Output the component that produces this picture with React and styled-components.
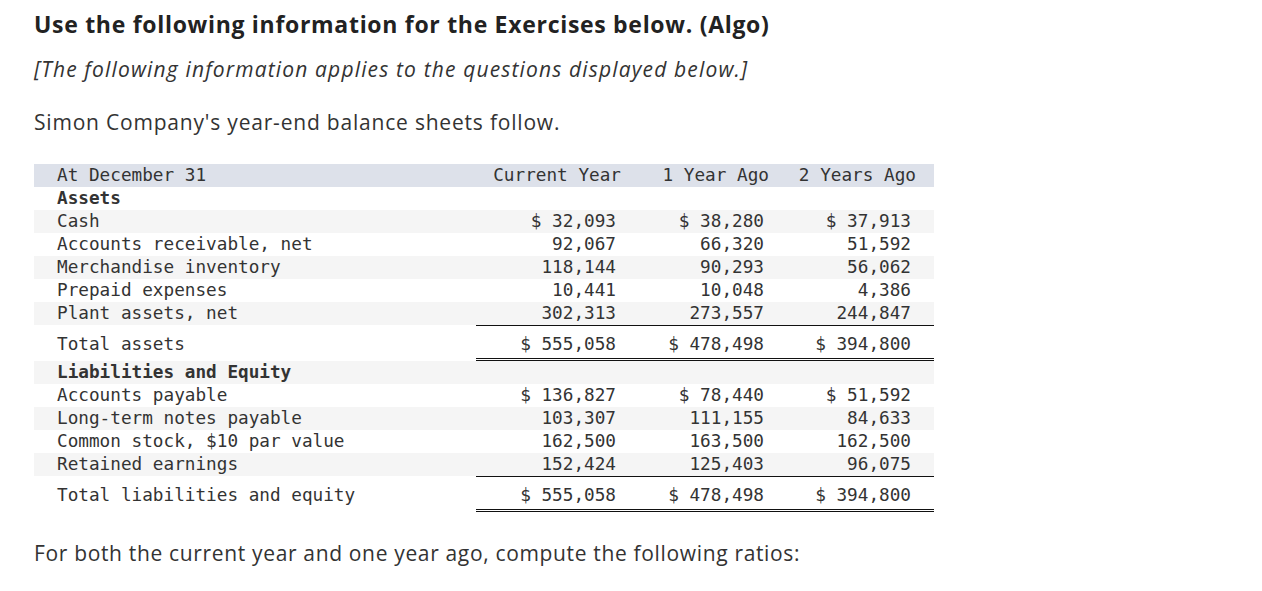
import React from 'react'
import styled, { createGlobalStyle } from 'styled-components'

const GlobalStyle = createGlobalStyle`
  body {
    margin: 0;
    background: #ffffff;
    color: #333333;
    font-family: 'Open Sans', 'Lato', sans-serif;
  }
`

const Page = styled.div`
  padding: 9px 34px 0px 34px;
`

const Heading = styled.h2`
  font-size: 23px;
  line-height: 30px;
  font-weight: 700;
  letter-spacing: 0.7px;
  color: #222222;
  margin: 0px;
`

const Note = styled.p`
  font-size: 21px;
  line-height: 28px;
  font-style: italic;
  letter-spacing: 1.15px;
  margin: 16px 0px 0px 0px;
`

const Intro = styled.p`
  font-size: 21px;
  line-height: 28px;
  letter-spacing: 0.8px;
  margin: 25px 0px 0px 0px;
`

const Sheet = styled.div`
  width: 900px;
  margin-top: 28px;
  font-family: 'DejaVu Sans Mono', 'Liberation Mono', monospace;
  font-size: 17.7px;
  line-height: 23px;
  color: #333333;
`

const COLUMNS = '442px 148px 148px 147px 15px'

const Row = styled.div`
  display: grid;
  grid-template-columns: ${COLUMNS};
  background: ${({ $shade }) =>
    $shade === 'header' ? '#dde1ea' : $shade ? '#f5f5f5' : 'transparent'};
`

const Label = styled.div`
  padding-left: 23px;
  font-weight: ${({ $bold }) => ($bold ? 700 : 400)};
  white-space: pre;
`

const Heads = styled.div`
  text-align: right;
  padding-right: 3px;
  white-space: pre;
`

const Num = styled.div`
  text-align: right;
  padding-right: 8px;
  white-space: pre;
`

const Figures = styled.div`
  grid-column: 2 / -1;
  display: grid;
  grid-template-columns: 148px 148px 147px 15px;
  padding: 7px 0px 2px 0px;
  border-top: 1px solid #111111;
  border-bottom: 3px double #111111;
`

const TotalLabel = styled(Label)`
  padding-top: 8px;
`

const Closing = styled.p`
  font-size: 21px;
  line-height: 28px;
  letter-spacing: 0.66px;
  margin: 27px 0px 0px 0px;
`

const assets = [
  ['Cash', '$ 32,093', '$ 38,280', '$ 37,913'],
  ['Accounts receivable, net', '92,067', '66,320', '51,592'],
  ['Merchandise inventory', '118,144', '90,293', '56,062'],
  ['Prepaid expenses', '10,441', '10,048', '4,386'],
  ['Plant assets, net', '302,313', '273,557', '244,847'],
]

const liabilities = [
  ['Accounts payable', '$ 136,827', '$ 78,440', '$ 51,592'],
  ['Long-term notes payable', '103,307', '111,155', '84,633'],
  ['Common stock, $10 par value', '162,500', '163,500', '162,500'],
  ['Retained earnings', '152,424', '125,403', '96,075'],
]

const Line = ({ row, shade }) => (
  <Row $shade={shade}>
    <Label>{row[0]}</Label>
    <Num>{row[1]}</Num>
    <Num>{row[2]}</Num>
    <Num>{row[3]}</Num>
    <div />
  </Row>
)

const Total = ({ label, values }) => (
  <Row>
    <TotalLabel>{label}</TotalLabel>
    <Figures>
      {values.map((v) => (
        <Num key={v}>{v}</Num>
      ))}
      <div />
    </Figures>
  </Row>
)

const App = () => (
  <Page>
    <GlobalStyle />
    <Heading>Use the following information for the Exercises below. (Algo)</Heading>
    <Note>[The following information applies to the questions displayed below.]</Note>
    <Intro>Simon Company's year-end balance sheets follow.</Intro>
    <Sheet>
      <Row $shade="header">
        <Label>At December 31</Label>
        <Heads>Current Year</Heads>
        <Heads>1 Year Ago</Heads>
        <Heads>2 Years Ago</Heads>
        <div />
      </Row>
      <Row>
        <Label $bold>Assets</Label>
      </Row>
      {assets.map((row, i) => (
        <Line key={row[0]} row={row} shade={i % 2 === 0} />
      ))}
      <Total label="Total assets" values={['$ 555,058', '$ 478,498', '$ 394,800']} />
      <Row $shade>
        <Label $bold>Liabilities and Equity</Label>
      </Row>
      {liabilities.map((row, i) => (
        <Line key={row[0]} row={row} shade={i % 2 === 1} />
      ))}
      <Total
        label="Total liabilities and equity"
        values={['$ 555,058', '$ 478,498', '$ 394,800']}
      />
    </Sheet>
    <Closing>For both the current year and one year ago, compute the following ratios:</Closing>
  </Page>
)

export default App
